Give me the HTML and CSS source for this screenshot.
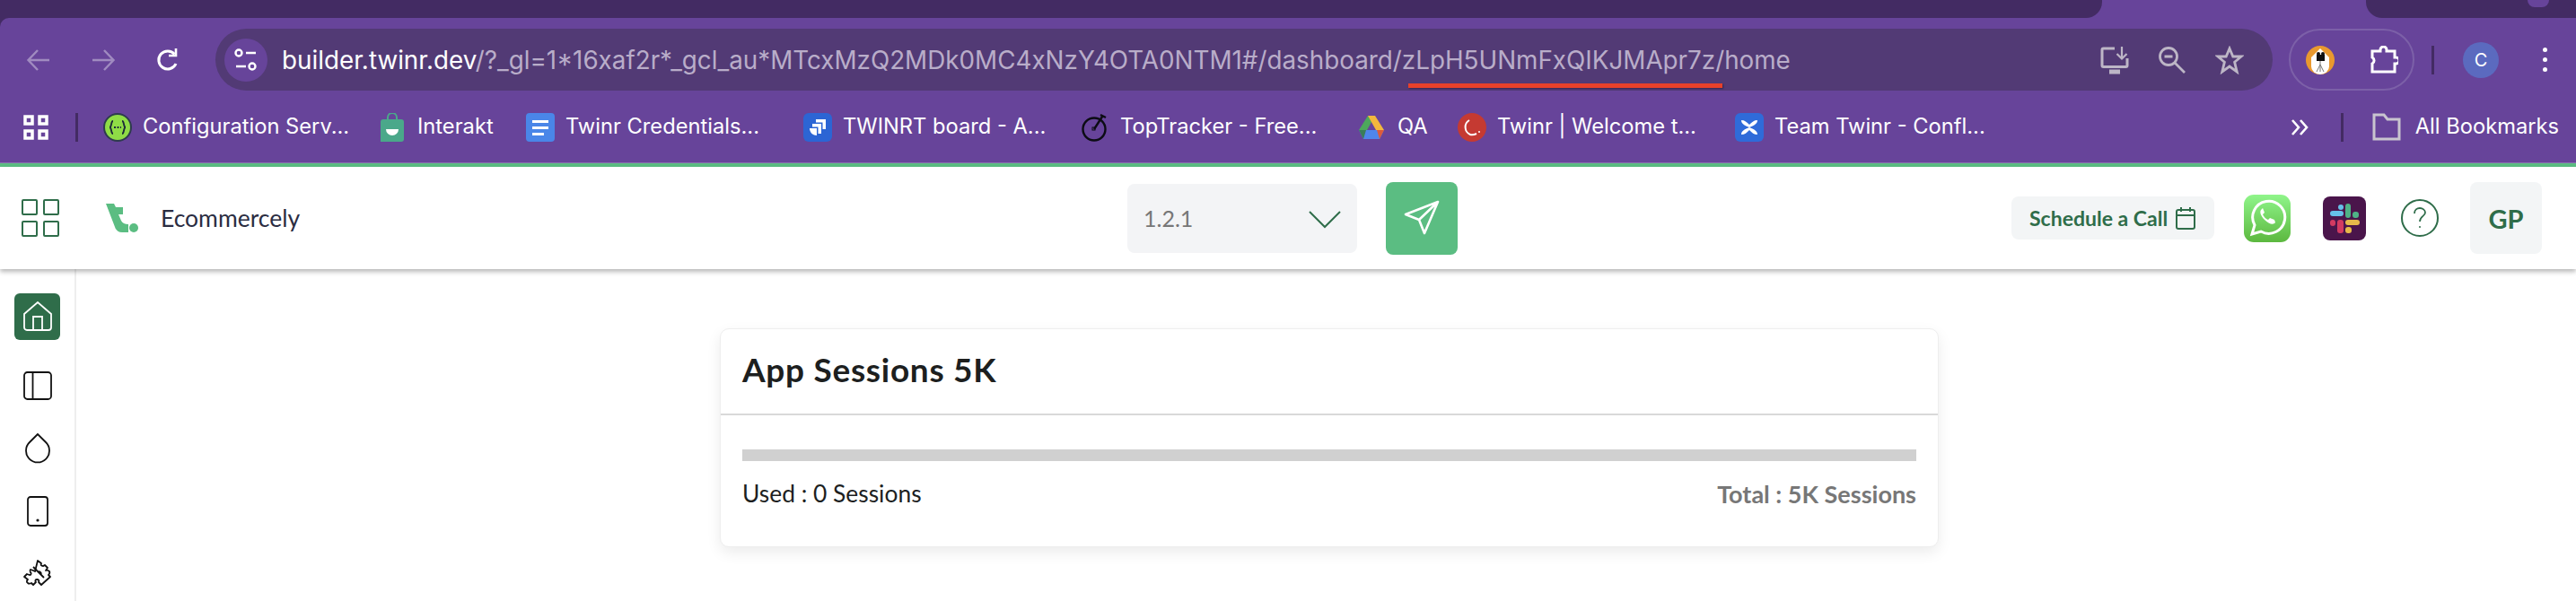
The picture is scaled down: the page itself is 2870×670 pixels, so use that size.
FILE: index.html
```html
<!DOCTYPE html>
<html lang="en">

<head>
    <meta charset="UTF-8">
    <meta name="viewport" content="width=device-width, initial-scale=1.0">
    <link rel="stylesheet" href="styles.css">
    <title>Ecommercely - Twinr</title>
</head>

<body>
    <div class="browser">
        <!-- Tab strip -->
        <div class="tabstrip">
            <div class="tabLeft"></div>
            <div class="tabGap"></div>
            <div class="tabRight"><span class="tabDot"></span></div>
        </div>

        <div class="toolbar">
            <!-- Navigation and address -->
            <div class="navRow">
                <button class="navBtn navMuted">
                    <svg width="30" height="30" viewBox="0 0 30 30" fill="none" stroke="currentColor" stroke-width="2.4"><path d="M27 15H4M14 4 3.500 15 14 26"/></svg>
                </button>
                <button class="navBtn navMuted">
                    <svg width="30" height="30" viewBox="0 0 30 30" fill="none" stroke="currentColor" stroke-width="2.4"><path d="M3 15h23M16 4l10.500 11L16 26"/></svg>
                </button>
                <button class="navBtn">
                    <svg width="30" height="30" viewBox="0 0 30 30" fill="none" stroke="currentColor" stroke-width="3"><path d="M24 19a10 10 0 1 1-1.500-10.500"/><path d="M24 2v8h-8" stroke-width="2.600"/></svg>
                </button>
                <div class="address">
                    <span class="siteChip">
                        <svg width="28" height="30" viewBox="0 0 28 30" fill="none" stroke="#fff" stroke-width="2.400"><circle cx="6" cy="7" r="3.500"/><path d="M14 7h11M3 22h11"/><circle cx="21" cy="22" r="3.500"/></svg>
                    </span>
                    <span class="url"><span class="urlHost">builder.twinr.dev</span>/?_gl=1*16xaf2r*_gcl_au*MTcxMzQ2MDk0MC4xNzY4OTA0NTM1#/dashboard/zLpH5UNmFxQIKJMApr7z/home</span>
                    <span class="urlMark"></span>
                    <div class="addressIcons">
                        <svg width="32" height="32" viewBox="0 0 32 32" fill="none" stroke="#bdb6c6" stroke-width="3"><path d="M16 3H3.500a1.500 1.500 0 0 0-1.500 1.500V22a1.500 1.500 0 0 0 1.500 1.500h25a1.500 1.500 0 0 0 1.500-1.500V14"/><path d="M24 1v13M18.500 9l5.500 5.500L29.500 9" stroke-width="2.200"/><path d="M10 29h12" stroke-width="5"/></svg>
                        <svg width="32" height="32" viewBox="0 0 32 32" fill="none" stroke="#bdb6c6" stroke-width="2.800"><circle cx="12" cy="12" r="9.500"/><path d="M7.500 12h9M19 19l11 11"/></svg>
                        <svg width="32" height="32" viewBox="0 0 32 32" fill="none" stroke="#bdb6c6" stroke-width="2.800"><path d="m16 3 3.800 9H29l-7.400 6.200L24.200 29 16 23l-8.200 6 2.600-10.800L3 12h9.200z"/></svg>
                    </div>
                </div>
                <div class="extensions">
                    <svg width="32" height="32" viewBox="0 0 32 32"><circle cx="16" cy="16" r="16" fill="#e9992f"/><path d="M16 3 26 13v10a10 9 0 0 1-20 0V13z" fill="#fff"/><rect x="12" y="10" width="9" height="7" fill="#111"/><circle cx="14" cy="9" r="2" fill="#111"/><circle cx="19" cy="9" r="2" fill="#111"/><path d="M16 17v4l-4 8M16 21v8M16 21l4 8" stroke="#777" stroke-width="1" fill="none"/></svg>
                    <svg width="32" height="32" viewBox="0 0 32 32" fill="none" stroke="#fff" stroke-width="3"><path d="M3 6h9V4.500a3.500 3.500 0 0 1 7 0V6h9v7h1.500a3.500 3.500 0 0 1 0 7H28v9H3v-9a4 4 0 0 0 0-7z"/></svg>
                </div>
                <span class="navSep"></span>
                <span class="avatar">C</span>
                <span class="kebab"><i></i><i></i><i></i></span>
            </div>

            <!-- Bookmarks bar -->
            <div class="bookmarks">
                <svg class="appsIcon" width="28" height="28" viewBox="0 0 28 28" fill="none" stroke="#fff" stroke-width="3.500"><rect x="2" y="2" width="8" height="8"/><rect x="18" y="2" width="8" height="8"/><rect x="2" y="18" width="8" height="8"/><rect x="18" y="18" width="8" height="8"/></svg>
                <span class="barSep"></span>
                <a class="bm bmWide">
                    <svg width="32" height="32" viewBox="0 0 32 32"><circle cx="16" cy="16" r="15" fill="#8fdc46" stroke="#2e3b4e" stroke-width="2"/><path d="M11 9c-3 0-1 7-4 7 3 0 1 7 4 7M21 9c3 0 1 7 4 7-3 0-1 7-4 7" fill="none" stroke="#1d2b3a" stroke-width="1.800"/><path d="M12 16h8" stroke="#1d2b3a" stroke-width="2" stroke-dasharray="2 1.500"/></svg>
                    <span>Configuration Serv...</span>
                </a>
                <a class="bm bmInterakt">
                    <svg width="26" height="32" viewBox="0 0 26 32"><path d="M8 8V5a5 5 0 0 1 10 0v3" fill="none" stroke="#4aa88a" stroke-width="2"/><path d="M3 7h20a3 3 0 0 1 3 3v19a3 3 0 0 1-3 3H0V10a3 3 0 0 1 3-3z" fill="#4aa88a"/><path d="M6 18h14a7 7 0 0 1-14 0z" fill="#fff"/></svg>
                    <span>Interakt</span>
                </a>
                <a class="bm bmWide">
                    <svg width="32" height="32" viewBox="0 0 32 32"><rect width="32" height="32" rx="4" fill="#4a86e8"/><path d="M7 8h18v3H7zM7 15h18v3H7zM7 22h13v3H7z" fill="#fff"/></svg>
                    <span>Twinr Credentials...</span>
                </a>
                <a class="bm bmWide">
                    <svg width="32" height="32" viewBox="0 0 32 32"><rect width="32" height="32" rx="6" fill="#2c65d4"/><path d="M25 7H14v3.500h7.500V18H25zM20 12H10v3.500h6.500V23H20zM15 17H7c0 5 4 8 8 8z" fill="#fff"/></svg>
                    <span>TWINRT board - A...</span>
                </a>
                <a class="bm bmWide">
                    <svg width="32" height="32" viewBox="0 0 32 32" fill="none" stroke="#0c0c14" stroke-width="2.400"><circle cx="15" cy="18" r="12.500"/><path d="m15 18 9-14M22 2l6 3" /><rect x="13" y="16" width="3" height="3" stroke-width="1"/></svg>
                    <span>TopTracker - Free...</span>
                </a>
                <a class="bm bmQa">
                    <svg width="30" height="30" viewBox="0 0 30 30"><path d="M11 2h8L10 18H1z" fill="#4da85c"/><path d="M11 2h8l10 16h-9z" fill="#f3b83d"/><path d="M1 18h9l10 0 9 0-5 10H6z" fill="#4f86ec"/><path d="M1 18h8l-3 10z" fill="#3a7d5a"/><path d="M29 18h-8l3 10z" fill="#dc5b3c"/></svg>
                    <span>QA</span>
                </a>
                <a class="bm bmWide">
                    <svg width="32" height="32" viewBox="0 0 32 32"><circle cx="16" cy="16" r="16" fill="#c53a32"/><path d="M13 8a9 9 0 0 0 1 16c3 1 5 0 7-1" fill="none" stroke="#fff" stroke-width="2"/><circle cx="24" cy="21" r="1" fill="#fff"/></svg>
                    <span>Twinr | Welcome t...</span>
                </a>
                <a class="bm">
                    <svg width="32" height="32" viewBox="0 0 32 32"><rect width="32" height="32" rx="6" fill="#2f6bd9"/><path d="M7 8c4 0 6 2 9 5 3-3 5-5 9-5 0 4-4 6-9 8-5-2-9-4-9-8zM7 24c4 0 6-2 9-5 3 3 5 5 9 5 0-4-4-6-9-8-5 2-9 4-9 8z" fill="#fff"/></svg>
                    <span>Team Twinr - Confl...</span>
                </a>
                <div class="barEnd">
                    <svg width="22" height="22" viewBox="0 0 22 22" fill="none" stroke="#fff" stroke-width="2.600"><path d="m3 3 7 8-7 8M12 3l7 8-7 8"/></svg>
                    <span class="barSep barSepEnd"></span>
                    <a class="bm bmAll">
                        <svg width="32" height="32" viewBox="0 0 32 32" fill="none" stroke="#c9c5cf" stroke-width="3"><path d="M2 2h11l4 5h13v22H2z"/></svg>
                        <span>All Bookmarks</span>
                    </a>
                </div>
            </div>
        </div>
        <div class="accentLine"></div>
    </div>

    <!-- Builder header -->
    <header class="appHeader">
        <div class="headerLeft">
            <svg class="headerGrid" width="42" height="42" viewBox="0 0 42 42" fill="none" stroke="#2f6d4a" stroke-width="2"><rect x="1" y="1" width="16" height="16" rx="1"/><rect x="25" y="1" width="16" height="16" rx="1"/><rect x="1" y="25" width="16" height="16" rx="1"/><rect x="25" y="25" width="16" height="16" rx="1"/></svg>
            <svg class="headerLogo" width="36" height="32" viewBox="0 0 36 32" fill="#5bbd82"><path d="M0 0H9L11 4H19V12H14L17 19Q19 23 25 23V32H18Q12 32 10 26Z"/><circle cx="31" cy="27" r="5"/></svg>
            <span class="appName">Ecommercely</span>
        </div>
        <div class="headerCenter">
            <div class="versionSelect">
                <span>1.2.1</span>
                <svg class="selectChevron" width="36" height="20" viewBox="0 0 36 20" fill="none" stroke="#2f6d4a" stroke-width="2"><path d="m1 1 17 17L35 1"/></svg>
            </div>
            <button class="publishBtn">
                <svg width="40" height="40" viewBox="0 0 40 40" fill="none" stroke="#fff" stroke-width="2.600" stroke-linejoin="round"><path d="M38 2 2 16l15 6 6 15zM38 2 17 22"/></svg>
            </button>
        </div>
        <div class="headerRight">
            <button class="callBtn">
                <span>Schedule a Call</span>
                <svg width="22" height="26" viewBox="0 0 22 26" fill="none" stroke="#2f6d4a" stroke-width="2"><rect x="1" y="4" width="20" height="21" rx="2"/><path d="M1 10h20M6 1v5M16 1v5"/></svg>
            </button>
            <svg class="whatsIcon" width="52" height="53" viewBox="0 0 52 53"><defs><linearGradient id="gradWa" x1="0" y1="0" x2="0" y2="1"><stop offset="0" stop-color="#8ff58a"/><stop offset="1" stop-color="#5cb83f"/></linearGradient></defs><rect width="52" height="53" rx="11" fill="url(#gradWa)"/><path d="M9 44l3-10a18 18 0 1 1 7 7z" fill="none" stroke="#fff" stroke-width="3"/><path d="M20 16c-3 2-2 7 3 12s10 6 12 3l-1-3-5-2-2 2c-3-1-5-4-6-6l2-2-2-5z" fill="#fff"/></svg>
            <svg class="slackIcon" width="48" height="49" viewBox="0 0 48 49"><rect width="48" height="49" rx="8" fill="#4a154b"/><rect x="8" y="16" width="15" height="6" rx="3" fill="#66c0e8"/><rect x="17" y="9" width="6" height="6" rx="3" fill="#66c0e8"/><rect x="25" y="8" width="6" height="16" rx="3" fill="#4fb286"/><rect x="33" y="17" width="7" height="7" rx="3" fill="#4fb286"/><rect x="25" y="26" width="16" height="6" rx="3" fill="#e6b94a"/><rect x="25" y="34" width="7" height="7" rx="3" fill="#e6b94a"/><rect x="16" y="26" width="7" height="15" rx="3" fill="#d33a61"/><rect x="8" y="26" width="6" height="7" rx="3" fill="#d33a61"/></svg>
            <svg class="helpIcon" width="42" height="42" viewBox="0 0 42 42" fill="none" stroke="#2f6d4a" stroke-width="2"><circle cx="21" cy="21" r="20"/><path d="M15 16c0-4 3-6 6-6s6 2 6 5c0 4-6 4-6 10" stroke-width="1.800"/><circle cx="21" cy="31" r="1" fill="#2f6d4a" stroke="none"/></svg>
            <div class="userBox">GP</div>
        </div>
    </header>

    <div class="appBody">
        <!-- Side navigation -->
        <nav class="sidebar">
            <a class="sideItem sideActive">
                <svg width="32" height="34" viewBox="0 0 32 34" fill="none" stroke="#fff" stroke-width="1.800"><path d="M1 14 16 1l15 13v15a3 3 0 0 1-3 3H4a3 3 0 0 1-3-3z"/><path d="M11 32V17h10v15"/></svg>
            </a>
            <a class="sideItem">
                <svg width="32" height="32" viewBox="0 0 32 32" fill="none" stroke="#111" stroke-width="1.800"><rect x="1" y="1" width="30" height="30" rx="3.500"/><path d="M10.500 1v30"/></svg>
            </a>
            <a class="sideItem">
                <svg width="28" height="34" viewBox="0 0 28 34" fill="none" stroke="#111" stroke-width="1.800"><path d="M14 1 5 10a13 13 0 1 0 18 0z"/></svg>
            </a>
            <a class="sideItem">
                <svg width="24" height="34" viewBox="0 0 24 34" fill="none" stroke="#111" stroke-width="1.800"><rect x="1" y="1" width="22" height="32" rx="3"/><circle cx="12" cy="27" r=".7" fill="#111"/></svg>
            </a>
            <a class="sideItem">
                <svg width="34" height="34" viewBox="0 0 34 34" fill="none" stroke="#111" stroke-width="1.800" stroke-linejoin="round"><path d="M17 2l4 3c-1 2 0 3 2 3 1 0 1-1 2-1l3 3-2 3c2-1 3 0 4 1 1 2 0 3-1 4l2 2-10 9-3-3c1-2 0-3-2-3s-2 2-1 3l-3 3-2-2c-2 1-3 1-4 0-2-1-1-3 0-4l-4-3 3-3 3 1c2 0 2-2 1-3-1-2-1-2 0-3l3 1 2 1z"/><path d="M12 9l12 12M17 15a2 2 0 0 1 3 3"/></svg>
            </a>
        </nav>

        <main class="content">
            <section class="card">
                <div class="cardHead">App Sessions 5K</div>
                <div class="cardBody">
                    <div class="usageBar"></div>
                    <div class="usageRow">
                        <span class="usedText">Used : 0 Sessions</span>
                        <span class="totalText">Total : 5K Sessions</span>
                    </div>
                </div>
            </section>
        </main>
    </div>
</body>

</html>
```

FILE: styles.css
```css
* {
    box-sizing: border-box;
}

html,
body {
    margin: 0px;
    padding: 0px;
    height: 670px;
    overflow: hidden;
    background-color: #fff;
}

body {
    font-family: "Lato", "Open Sans", sans-serif;
}

svg {
    display: block;
    flex-shrink: 0;
}

button {
    border: 0px;
    padding: 0px;
    background: none;
    font-family: inherit;
}

.browser {
    background-color: #432b63;
}

.tabstrip {
    display: flex;
    height: 20px;
    background-color: #67449a;
}

.tabLeft {
    width: 2342px;
    background-color: #432b63;
    border-bottom-right-radius: 18px;
}

.tabGap {
    width: 294px;
}

.tabRight {
    flex: 1;
    background-color: #432b63;
    border-bottom-left-radius: 18px;
    padding-left: 180px;
}

.tabDot {
    display: block;
    width: 24px;
    height: 8px;
    background-color: #67449a;
    border-radius: 0px 0px 10px 10px;
}

.toolbar {
    height: 161px;
    background-color: #67449a;
    border-top-left-radius: 10px;
    font-family: "Inter", "Noto Sans", sans-serif;
}

.navRow {
    display: flex;
    align-items: flex-start;
    height: 93px;
    padding: 12px 0px 12px 7px;
}

.navBtn {
    display: flex;
    align-items: center;
    justify-content: center;
    width: 72px;
    height: 69px;
    color: #fff;
}

.navMuted {
    color: #a08bc0;
}

.address {
    position: relative;
    display: flex;
    align-items: center;
    width: 2292px;
    height: 69px;
    margin-left: 17px;
    padding: 0px 32px 0px 10px;
    background-color: #523a75;
    border-radius: 35px;
}

.siteChip {
    display: flex;
    align-items: center;
    justify-content: center;
    width: 48px;
    height: 48px;
    border-radius: 50%;
    background-color: #67449a;
}

.url {
    margin-left: 16px;
    font-size: 27.8px;
    color: #b9adc9;
    white-space: nowrap;
}

.urlHost {
    color: #fff;
}

/* red underline drawn on top of the address text */
.urlMark {
    position: absolute;
    left: 1329px;
    top: 61px;
    width: 350px;
    height: 5px;
    background-color: #e8412a;
    box-shadow: 1px 1px 2px rgba(0, 0, 0, 0.35);
}

.addressIcons {
    display: flex;
    gap: 32px;
    margin-left: auto;
}

.extensions {
    display: flex;
    align-items: center;
    justify-content: space-between;
    width: 140px;
    height: 69px;
    margin-left: 18px;
    padding: 0px 16px 0px 17px;
    border: 2px solid #7c60a8;
    border-radius: 35px;
}

.navSep {
    width: 3px;
    height: 32px;
    margin: 19px 0px 0px 19px;
    background-color: #432b63;
}

.avatar {
    display: flex;
    align-items: center;
    justify-content: center;
    width: 40px;
    height: 40px;
    margin: 15px 0px 0px 32px;
    border-radius: 50%;
    background-color: #5b6abf;
    color: #fff;
    font-size: 20px;
}

.kebab {
    display: flex;
    flex-direction: column;
    gap: 6px;
    margin: 21px 0px 0px 49px;
}

.kebab i {
    display: block;
    width: 5px;
    height: 5px;
    border-radius: 50%;
    background-color: #fff;
}

.bookmarks {
    display: flex;
    align-items: center;
    height: 57px;
    padding: 0px 19px 0px 26px;
    font-size: 23.7px;
    color: #fff;
}

.barSep {
    width: 3px;
    height: 32px;
    margin: 0px 28px 0px 30px;
    background-color: #432b63;
}

.bm {
    display: flex;
    align-items: center;
    gap: 12px;
    white-space: nowrap;
}

.bm span {
    padding-bottom: 3px;
}

.bmWide {
    width: 309px;
}

.bmInterakt {
    width: 162px;
    gap: 15px;
}

.bmQa {
    width: 111px;
    gap: 14px;
}

.bmAll {
    gap: 16px;
}

.barEnd {
    display: flex;
    align-items: center;
    margin-left: auto;
}

.barSepEnd {
    margin: 0px 32px 0px 35px;
}

.accentLine {
    height: 5px;
    background-color: #5bbd82;
    border-top: 1px solid #8a6fb0;
}

.appHeader {
    position: relative;
    z-index: 2;
    display: grid;
    grid-template-columns: 1fr auto 1fr;
    align-items: center;
    height: 114px;
    background-color: #fff;
    box-shadow: 0px 3px 5px rgba(0, 0, 0, 0.28);
}

.headerLeft {
    display: flex;
    align-items: center;
    padding-left: 24px;
}

.headerLogo {
    margin-left: 52px;
}

.appName {
    margin-left: 25px;
    font-size: 26.5px;
    color: #2b2d42;
}

.headerCenter {
    display: flex;
    align-items: center;
    gap: 32px;
    margin-left: 10px;
}

.versionSelect {
    display: flex;
    align-items: center;
    justify-content: space-between;
    width: 256px;
    height: 77px;
    padding: 0px 18px;
    background-color: #f3f4f6;
    border-radius: 8px;
    font-size: 25px;
    color: #777;
}

.selectChevron {
    margin-top: 3px;
}

.publishBtn {
    display: flex;
    align-items: center;
    justify-content: center;
    width: 80px;
    height: 81px;
    background-color: #5bbd82;
    border-radius: 8px;
}

.headerRight {
    display: flex;
    align-items: center;
    justify-content: flex-end;
    padding-right: 38px;
}

.callBtn {
    display: flex;
    align-items: center;
    gap: 9px;
    width: 226px;
    height: 48px;
    padding-left: 20px;
    background-color: #f3f5f6;
    border-radius: 8px;
    font-size: 23px;
    font-weight: 700;
    color: #2f6d4a;
}

.whatsIcon {
    margin-left: 33px;
}

.slackIcon {
    margin-left: 36px;
}

.helpIcon {
    margin-left: 39px;
}

.userBox {
    display: flex;
    align-items: center;
    justify-content: center;
    width: 80px;
    height: 80px;
    margin-left: 35px;
    background-color: #f3f5f6;
    border-radius: 8px;
    font-size: 29px;
    font-weight: 700;
    color: #2f6d4a;
}

.appBody {
    display: flex;
    height: 370px;
}

.sidebar {
    display: flex;
    flex-direction: column;
    align-items: center;
    gap: 18px;
    width: 85px;
    padding-top: 27px;
    border-right: 2px solid #eeeeee;
}

.sideItem {
    display: flex;
    align-items: center;
    justify-content: center;
    flex-shrink: 0;
    width: 51px;
    height: 52px;
    border-radius: 6px;
}

.sideActive {
    margin-bottom: 7px;
    background-color: #2f6d4a;
}

.content {
    flex: 1;
    padding: 66px 0px 0px 717px;
}

.card {
    width: 1358px;
    height: 244px;
    background-color: #fff;
    border-radius: 10px;
    border: 1px solid #eeeeee;
    box-shadow: 0px 6px 16px rgba(0, 0, 0, 0.08);
}

.cardHead {
    height: 96px;
    padding: 22px 24px 0px;
    border-bottom: 2px solid #d9d9d9;
    font-size: 37px;
    font-weight: 700;
    letter-spacing: 0.7px;
    color: #1d1f1f;
}

.cardBody {
    padding: 38px 24px 0px;
}

.usageBar {
    height: 13px;
    background-color: #d0d0d0;
}

.usageRow {
    display: flex;
    justify-content: space-between;
    margin-top: 20px;
    font-size: 26.4px;
}

.usedText {
    color: #1d1f1f;
}

.totalText {
    font-weight: 700;
    font-size: 27px;
    color: #777;
}
```
